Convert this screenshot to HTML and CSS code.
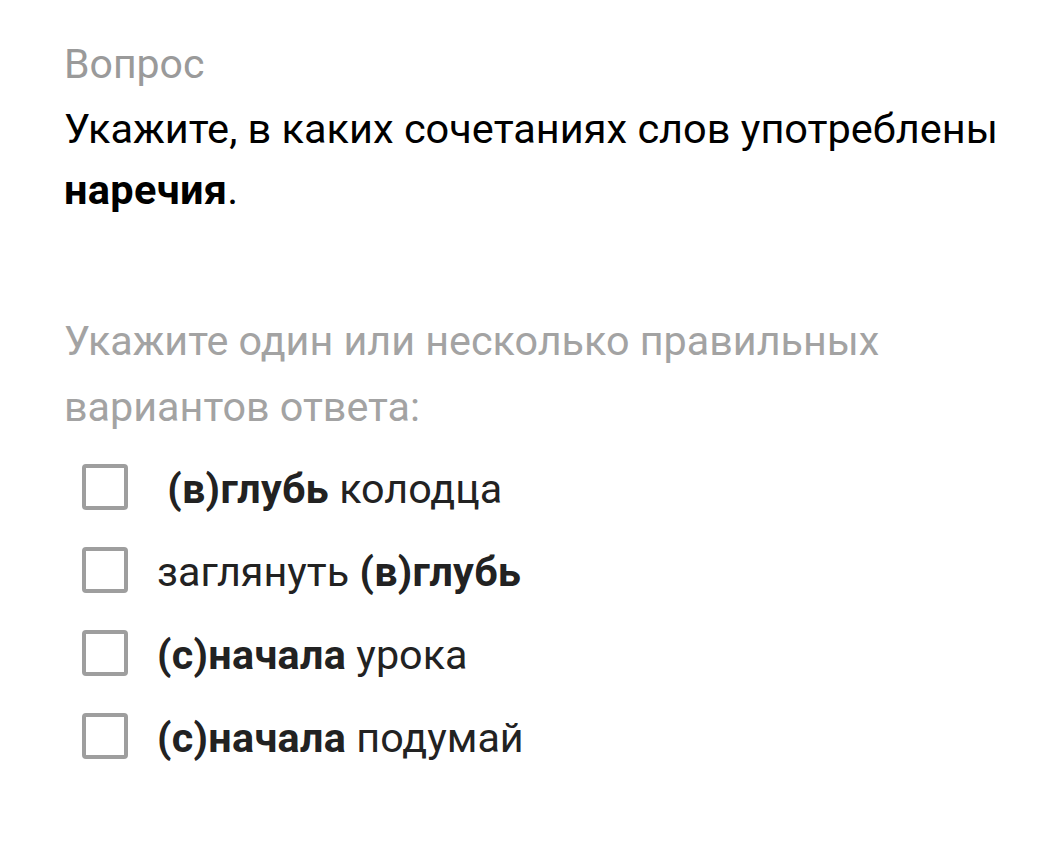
FILE: index.html
```html
<!DOCTYPE html>
<html lang="ru">
<head>
<meta charset="utf-8">
<link rel="stylesheet" href="styles.css">
</head>
<body>
<main class="question">
  <div class="label">Вопрос</div>
  <p class="text">Укажите, в каких сочетаниях слов употреблены <b>наречия</b>.</p>
  <p class="hint">Укажите один или несколько правильных вариантов ответа:</p>
  <ul class="options">
    <li class="option"><span class="box"></span><span class="opt-text">&nbsp;<b>(в)глубь</b> колодца</span></li>
    <li class="option"><span class="box"></span><span class="opt-text">заглянуть <b>(в)глубь</b></span></li>
    <li class="option"><span class="box"></span><span class="opt-text"><b>(с)начала</b> урока</span></li>
    <li class="option"><span class="box"></span><span class="opt-text"><b>(с)начала</b> подумай</span></li>
  </ul>
</main>
</body>
</html>
```
FILE: styles.css
```css
html, body {
  margin: 0;
  padding: 0;
  background: #fff;
}
body {
  font-family: Roboto, "Noto Sans", sans-serif;
}
.question {
  padding: 39px 36px 0 64px;
}
.label {
  font-size: 41px;
  line-height: 50px;
  color: #9a9a9a;
}
.text {
  margin: 9px 0 0;
  font-size: 41.5px;
  line-height: 61px;
  color: #000;
}
.text b {
  font-weight: 700;
  letter-spacing: 0.3px;
}
.hint {
  margin: 88px 0 0;
  font-size: 41.3px;
  line-height: 66px;
  color: #a3a3a3;
}
.options {
  list-style: none;
  margin: 7px 0 0;
  padding: 0 0 0 18px;
}
.option {
  display: flex;
  align-items: center;
  gap: 29px;
  height: 83px;
  font-size: 41.3px;
  color: #222;
}
.box {
  flex: none;
  width: 38px;
  height: 38px;
  border: 4px solid #9e9e9e;
  border-radius: 4px;
  margin-bottom: 4px;
}
.opt-text b {
  font-weight: 700;
  letter-spacing: 0.3px;
}
```
